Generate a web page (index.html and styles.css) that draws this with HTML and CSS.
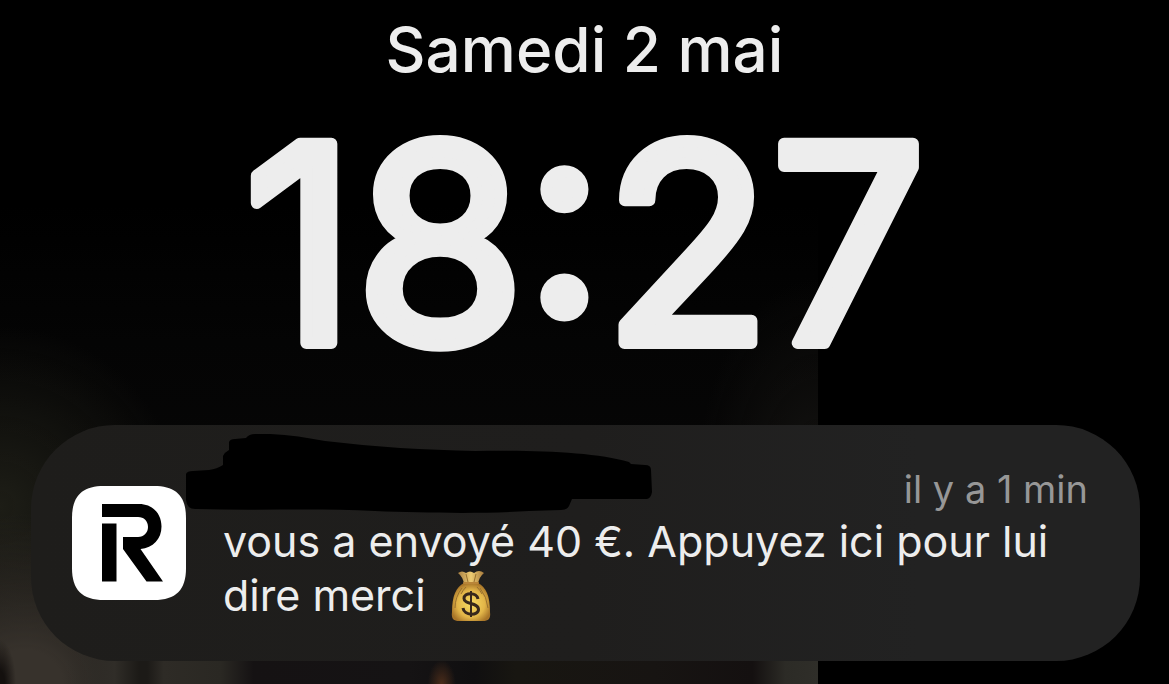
FILE: index.html
```html
<!DOCTYPE html>
<html lang="fr">
<head>
<meta charset="utf-8">
<title>Écran verrouillé</title>
<link rel="stylesheet" href="styles.css">
</head>
<body>
<div class="wallpaper" aria-hidden="true"><div class="wallpaper-strip"></div></div>
<main class="lock">
  <header class="clock">
    <p class="date">Samedi 2 mai</p>
    <svg class="time" viewBox="0 0 720 240" role="img" aria-label="18:27">
      <text class="time-text" x="360" y="223" text-anchor="middle">18:27</text>
    </svg>
  </header>
  <article class="card">
    <svg class="app-icon" viewBox="0 0 114 114" role="img" aria-label="Revolut">
      <path fill="#fff" d="M32 0H82C104 0 114 10 114 32V82C114 104 104 114 82 114H32C10 114 0 104 0 82V32C0 10 10 0 32 0Z"/>
      <path d="M30 18H67C81 18 89.500 28 89.500 40.500C89.500 53 81 62 68.500 63L91 95.500H74.500L51 63V51H66C72 51 76 46.500 76 41C76 35 72 31 66 31H30Z"/>
      <path d="M30 37.500H44.500V95.500H30Z"/>
    </svg>
    <div class="content">
      <div class="card-head">
        <svg class="scribble" viewBox="0 0 468 80" role="img" aria-label="Nom masqué">
          <path d="M1 40Q2 37 8 37L24 36Q32 35 38 31L38 22Q40 18 44 16V8Q45 5 50 5L61 4Q64 0 70 0C94 -1 118 3 140 7C190 13 240 16 290 17C350 16 410 18 444 28L446 30L460 31Q466 31 466 36L467 58Q466 64 462 65H387L384 72Q382 76 376 76L344 77C300 80 240 79 190 77C130 74 70 77 12 75Q2 76 1 66Z"/>
        </svg>
        <time class="ago">il y a 1 min</time>
      </div>
      <p class="message">vous a envoyé 40 €. Appuyez ici pour lui dire merci
        <svg class="bag" viewBox="0 0 42 52" role="img" aria-label="sac d’argent">
          <defs>
            <radialGradient id="gold" cx="50%" cy="55%" r="55%">
              <stop offset="0" stop-color="#f8dc62"/>
              <stop offset=".65" stop-color="#e2b548"/>
              <stop offset="1" stop-color="#a87528"/>
            </radialGradient>
            <linearGradient id="neck" x1="0" x2="1">
              <stop offset="0" stop-color="#a98042"/>
              <stop offset=".5" stop-color="#edcb72"/>
              <stop offset="1" stop-color="#a77a3c"/>
            </linearGradient>
          </defs>
          <path fill="url(#neck)" d="M8 3Q12 0 16 3Q20 0 24 3Q29 -1 34 3Q29 7 28 14L14 14Q13 7 8 3Z"/>
          <path fill="url(#gold)" d="M14 13H28C36 17 40 26 40 42C41 49 38 51 33 51H9C4 51 1 49 2 42C2 26 6 17 14 13Z"/>
          <path fill="none" stroke="#98702e" d="M12 18Q5 27 5 38M30 18Q37 27 38 38M16 17Q13 20 11 24M27 17Q30 20 32 24M16 4L18 12M26 4L24 12"/>
          <path fill="none" stroke="#b98538" stroke-width="2" stroke-linecap="round" d="M14 13H28"/>
          <path fill="none" stroke="#38281c" stroke-width="3" d="M28 29C27 22 14 22 14 28.500C14 35 28.500 32 28.500 39.500C28.500 46 14 46 13 38"/>
          <path stroke="#38281c" stroke-width="2" d="M21 21V47"/>
        </svg></p>
    </div>
  </article>
</main>
</body>
</html>
```
FILE: styles.css
```css
* { box-sizing: border-box; }
body {
  margin: 0;
  min-height: 100vh;
  background: #000;
  color: #ededed;
  font-family: Inter, "Liberation Sans", sans-serif;
  position: relative;
  overflow-x: hidden;
}
p { margin: 0; }
.wallpaper {
  position: absolute;
  inset: 0 30% 0 0;
  background:
    radial-gradient(ellipse 16px 44px at 0 100%, #14100e 30%, transparent 100%),
    radial-gradient(ellipse 190px 170px at 3% 100%, #37322c 0%, #37322c 20%, transparent 100%),
    radial-gradient(ellipse 180px 180px at 0 74%, #1d1d16 0%, transparent 100%),
    radial-gradient(ellipse 120px 200px at 100% 70%, #131210, transparent 100%),
    linear-gradient(#000 30%, #040404 50%, #0a0909 100%);
}
.wallpaper-strip {
  position: absolute;
  inset: auto 0 0 0;
  height: 40px;
  background:
    radial-gradient(ellipse 14px 24px at 54% 100%, #4a2c1a, transparent),
    linear-gradient(90deg, transparent 0%, transparent 8%, #302d28 14%, #1c1a17 17%, #1c1a17 18%, #2e2b26 20%, #2a2823 27%, #151213 31%, #151314 50%, #100f10 58%, #181611 63%, #171412 80%, #141010 92%, #2c2b26 96%, #2f2e29 100%);
}
.lock { position: relative; }
.clock {
  display: flex;
  flex-direction: column;
  align-items: center;
  padding-top: 10px;
}
.date {
  font-size: 62px;
  line-height: 80px;
  font-weight: 500;
}
.time {
  display: block;
  width: 720px;
  height: 240px;
  margin-top: 30px;
  overflow: visible;
}
.time-text {
  font-size: 274px;
  font-weight: 400;
  fill: #ededed;
  stroke: #ededed;
  stroke-width: 12px;
  stroke-linejoin: round;
}
.card {
  display: flex;
  align-items: flex-start;
  gap: 37px;
  margin: 65px 29px 0 31px;
  min-height: 236px;
  padding: 9px 52px 36px 41px;
  border-radius: 84px;
  background: linear-gradient(90deg, #1e1d1b, #1f1e1d 50%, #222 80%);
}
.app-icon { flex: none; width: 114px; height: 114px; margin-top: 52px; }
.content { flex: 1; min-width: 0; }
.card-head {
  display: flex;
  justify-content: space-between;
  align-items: flex-end;
}
.scribble { width: 468px; height: 80px; margin-left: -38px; }
.ago {
  color: #979797;
  font-size: 38px;
  line-height: 48px;
  padding-bottom: 1px;
}
.message {
  font-size: 43px;
  line-height: 54px;
}
.bag { width: 42px; height: 52px; margin: -8px 0 0 12px; vertical-align: -11px; }
```
